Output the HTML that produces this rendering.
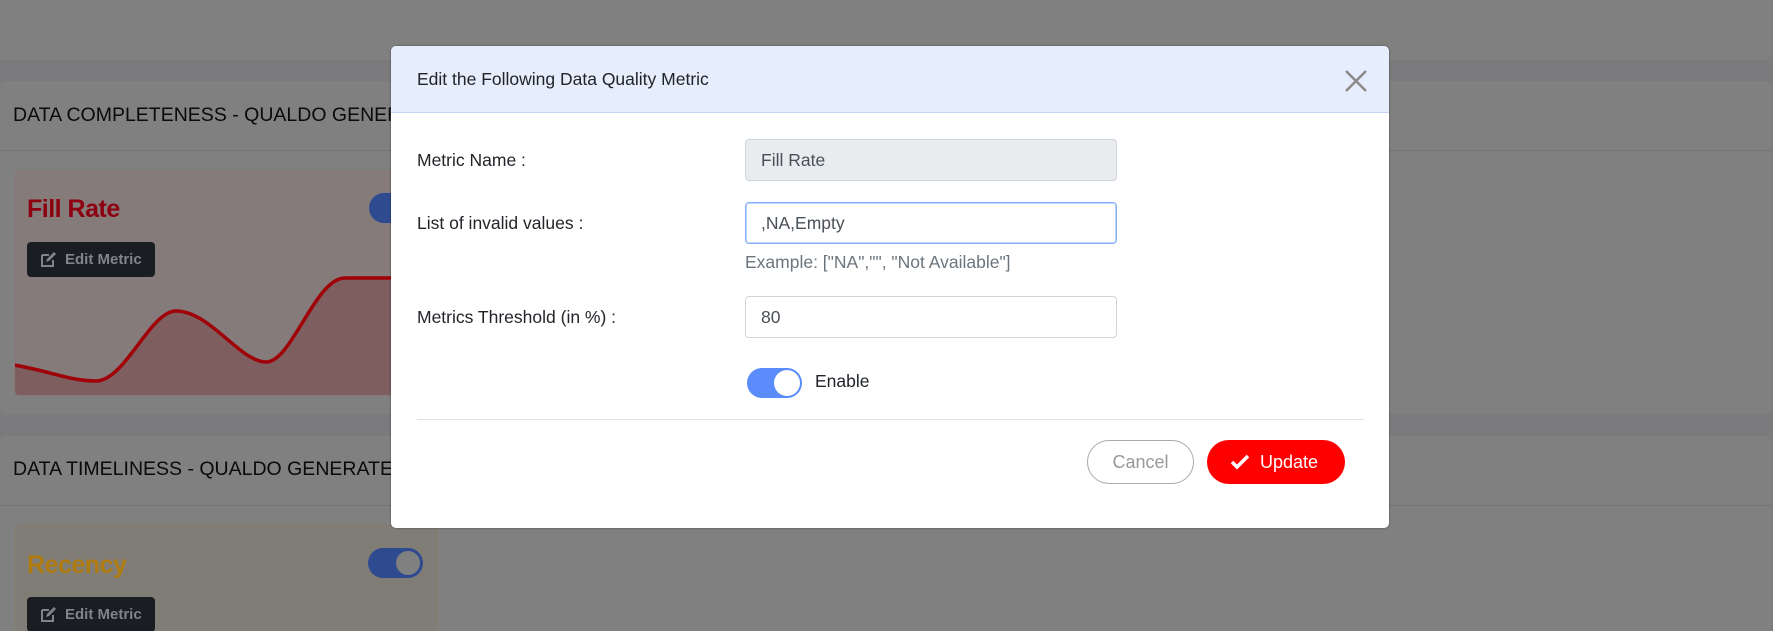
<!DOCTYPE html>
<html style="width:1773px;height:631px;overflow:hidden"><head><meta charset="utf-8">
<style>
*{box-sizing:border-box;margin:0;padding:0}
html,body{width:1773px;height:631px;overflow:hidden}
body{background:#7b7b7d;font-family:"Liberation Sans",Arial,sans-serif;position:relative}
.abs{position:absolute}
.card{background:#808080;border-radius:6px}
.sechead{font-size:19.5px;color:#0a0a0a;white-space:nowrap}
.mcard{border-radius:5px;border:1px solid}
.editbtn{background:#1a1d21;border-radius:4px;color:#7f858b;font-weight:bold;font-size:15px;display:flex;align-items:center;gap:8px;padding-left:13px}
.modal{left:391px;top:46px;width:998px;height:482px;background:#fff;border-radius:5px;overflow:hidden;box-shadow:0 0 2px rgba(0,0,0,.4)}
.mh{position:absolute;left:0;top:0;width:100%;height:67px;background:#e6edfd;border-bottom:1px solid #c3d3f6}
.lbl{position:absolute;left:26px;font-size:17.5px;color:#212529}
.inp{position:absolute;left:354px;width:372px;height:42px;border:1px solid #ced4da;border-radius:4px;font-size:17.5px;color:#495057;padding-left:15px;line-height:40px}
</style></head><body>
<div class="abs card" style="left:0;top:0;width:1771px;height:60px;border-radius:0 0 6px 0"></div>
<div class="abs card" style="left:0;top:81px;width:1771px;height:333px"></div>
<div class="abs" style="left:0;top:150px;width:1771px;height:1px;background:#747474"></div>
<div class="abs sechead" style="left:13px;top:104px">DATA COMPLETENESS - QUALDO GENERATED</div>
<div class="abs mcard" style="left:14px;top:170px;width:420px;height:226px;background:#857b7b;border-color:#8a7878;overflow:hidden">
<svg class="abs" style="left:-15px;top:-171px" width="440" height="400">
<path d="M14,365 C50,371 70,381 96,381 C125,381 150,311 176,311 C210,311 240,362 266,362 C292,362 315,278 345,278 L440,278 L440,400 L14,400 Z" fill="#7e5e5f"/>
<path d="M14,365 C50,371 70,381 96,381 C125,381 150,311 176,311 C210,311 240,362 266,362 C292,362 315,278 345,278 L440,278" fill="none" stroke="#a00008" stroke-width="3.5"/>
</svg>
<div class="abs" style="left:12px;top:24px;font-size:25px;font-weight:bold;color:#8c0010;letter-spacing:-0.5px">Fill Rate</div>
<div class="abs" style="left:354px;top:22px;width:54px;height:30px;border-radius:15px;background:#2f4b8f"></div>
<div class="abs editbtn" style="left:12px;top:71px;width:128px;height:35px"><svg width="17" height="17" viewBox="0 0 17 17"><path d="M2 4h7M2 4v11h11V9" fill="none" stroke="#7f858b" stroke-width="2"/><path d="M6 11l1-3 7-7 2 2-7 7z" fill="#7f858b"/></svg>Edit Metric</div>
</div>
<div class="abs card" style="left:0;top:436px;width:1771px;height:195px;border-radius:6px 6px 0 0"></div>
<div class="abs" style="left:0;top:505px;width:1771px;height:1px;background:#747474"></div>
<div class="abs sechead" style="left:13px;top:458px">DATA TIMELINESS - QUALDO GENERATED</div>
<div class="abs mcard" style="left:14px;top:524px;width:424px;height:107px;background:#807d77;border-color:#85806f;border-bottom:none;border-radius:5px 5px 0 0">
<div class="abs" style="left:12px;top:26px;font-size:25px;font-weight:bold;color:#b07c10;letter-spacing:-0.5px">Recency</div>
<div class="abs" style="left:353px;top:23px;width:55px;height:30px;border-radius:15px;background:#2f4b8f"><div class="abs" style="right:3px;top:3px;width:24px;height:24px;border-radius:50%;background:#808080"></div></div>
<div class="abs editbtn" style="left:12px;top:72px;width:128px;height:35px"><svg width="17" height="17" viewBox="0 0 17 17"><path d="M2 4h7M2 4v11h11V9" fill="none" stroke="#7f858b" stroke-width="2"/><path d="M6 11l1-3 7-7 2 2-7 7z" fill="#7f858b"/></svg>Edit Metric</div>
</div>

<div class="abs modal">
<div class="mh"></div>
<div class="abs" style="left:26px;top:23px;font-size:17.5px;color:#212529">Edit the Following Data Quality Metric</div>
<svg class="abs" style="left:954px;top:24px" width="22" height="22"><path d="M1 1L21 21M21 1L1 21" stroke="#8a8a8a" stroke-width="2.5"/></svg>
<div class="lbl" style="top:104px">Metric Name :</div>
<div class="inp" style="top:93px;background:#e9ecef">Fill Rate</div>
<div class="lbl" style="top:167px">List of invalid values :</div>
<div class="inp" style="top:156px;border-color:#86b0f5;box-shadow:0 0 0 1px #c0d6fb inset">,NA,Empty</div>
<div class="abs" style="left:354px;top:206px;font-size:17.5px;color:#6c757d">Example: ["NA","", "Not Available"]</div>
<div class="lbl" style="top:261px">Metrics Threshold (in %) :</div>
<div class="inp" style="top:250px">80</div>
<div class="abs" style="left:356px;top:322px;width:55px;height:30px;border-radius:15px;background:#5a8dfb"><div class="abs" style="right:2px;top:2px;width:26px;height:26px;border-radius:50%;background:#fff"></div></div>
<div class="abs" style="left:424px;top:325px;font-size:17.5px;color:#212529">Enable</div>
<div class="abs" style="left:26px;top:373px;width:947px;height:1px;background:#e2e2e2"></div>
<div class="abs" style="left:696px;top:394px;width:107px;height:44px;border:1px solid #aaa;border-radius:22px;color:#999;font-size:18px;text-align:center;line-height:42px">Cancel</div>
<div class="abs" style="left:816px;top:394px;width:138px;height:44px;border-radius:22px;background:#ff0000;color:#fff;font-size:18px;line-height:44px;padding-left:23px;display:flex;align-items:center;gap:10px"><svg width="20" height="16" viewBox="0 0 20 16"><path d="M2 8l5 5L18 2" fill="none" stroke="#fff" stroke-width="3.5"/></svg>Update</div>
</div>
</body></html>
